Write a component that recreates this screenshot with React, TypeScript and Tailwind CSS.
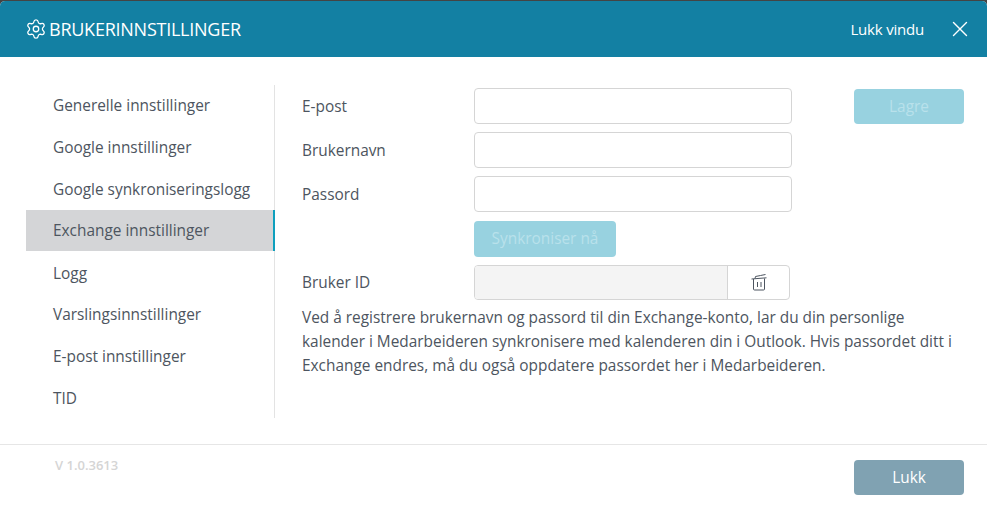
import { Settings, X } from 'lucide-react';

const menuItems = [
  'Generelle innstillinger',
  'Google innstillinger',
  'Google synkroniseringslogg',
  'Exchange innstillinger',
  'Logg',
  'Varslingsinnstillinger',
  'E-post innstillinger',
  'TID',
];

const Field = ({ label }: { label: string }) => (
  <div className="flex items-center h-9">
    <label className="w-[172px] pt-px text-[15.4px] text-[#4d5560]">{label}</label>
    <input className="w-[318px] h-9 border border-[#d5d5d5] rounded-[4px] bg-white" />
  </div>
);

const TrashIcon = () => (
  <svg width="16" height="17" viewBox="0 0 16 17" fill="none" stroke="currentColor" strokeWidth="1">
    <path d="M0.5 5l15-1.2" />
    <path d="M4 4.5l0.5-2 5-1 5-1" />
    <path d="M2.5 5v10a1 1 0 0 0 1 1h9a1 1 0 0 0 1-1V4.5" />
    <path d="M6.5 8v5M10 8v5" />
  </svg>
);

export default function App() {
  return (
    <div className="w-[987px] h-[508px] bg-[#444444] pt-px overflow-hidden font-['Open_Sans',sans-serif]">
      <div className="h-[507px] bg-white rounded-t-[5px] overflow-hidden flex flex-col">
        <header className="h-14 shrink-0 bg-[#1380a3] text-white flex items-center pl-[25px] pr-[14px]">
          <Settings className="w-[22px] h-[22px] mr-[2px]" strokeWidth={1.4} />
          <h1 className="text-[18px] tracking-[-0.25px]">BRUKERINNSTILLINGER</h1>
          <span className="ml-auto text-[15px] tracking-[-0.2px]">Lukk vindu</span>
          <X className="w-[26px] h-[26px] ml-[23px]" strokeWidth={1.3} />
        </header>

        <div className="flex-1 flex pl-[26px] pt-[28px]">
          <nav className="w-[249px] h-[333px] border-r border-[#e3e3e3] flex flex-col">
            {menuItems.map((item) => (
              <div
                key={item}
                className={
                  item === 'Exchange innstillinger'
                    ? 'h-[41px] mb-[0.8px] shrink-0 flex items-center pl-[27px] text-[15.4px] text-[#4d5560] bg-[#d4d5d7] border-r-[2px] border-[#0e9fbd] -mr-px'
                    : 'h-[41.8px] shrink-0 flex items-center pl-[27px] text-[15.4px] text-[#4d5560]'
                }
              >
                {item}
              </div>
            ))}
          </nav>

          <main className="w-[689px] pl-[27px] pt-[3px]">
            <div className="flex items-start justify-between">
              <div className="w-[490px]">
                <div className="flex flex-col gap-2">
                  <Field label="E-post" />
                  <Field label="Brukernavn" />
                  <Field label="Passord" />
                </div>
                <button className="ml-[172px] mt-[9px] w-[142px] h-9 bg-[#98d2e0] text-[#b9e1eb] text-[15.4px] rounded-[4px]">
                  Synkroniser nå
                </button>
                <div className="flex items-center mt-2">
                  <label className="w-[172px] text-[15.4px] text-[#4d5560]">Bruker ID</label>
                  <div className="w-[316px] h-[35px] flex border border-[#d5d5d5] rounded-[4px] overflow-hidden">
                    <div className="flex-1 bg-[#f4f4f4]" />
                    <div className="w-[62px] border-l border-[#d5d5d5] flex items-center justify-center text-[#4d5560]">
                      <TrashIcon />
                    </div>
                  </div>
                </div>
              </div>
              <button className="mt-px w-[110px] h-[35px] pt-px bg-[#98d2e0] text-[#b9e1eb] text-[15.4px] rounded-[4px]">
                Lagre
              </button>
            </div>
            <p className="mt-[6px] text-[15.4px] leading-6 text-[#4d5560]">
              Ved å registrere brukernavn og passord til din Exchange-konto, lar du din personlige
              <br />
              kalender i Medarbeideren synkronisere med kalenderen din i Outlook. Hvis passordet ditt i
              <br />
              Exchange endres, må du også oppdatere passordet her i Medarbeideren.
            </p>
          </main>
        </div>

        <footer className="h-[64px] shrink-0 border-t border-[#e6e6e6] flex items-start justify-between pl-[55px] pr-[23px]">
          <span className="mt-[11px] text-[13px] font-semibold text-[#d5d5d5]">V 1.0.3613</span>
          <button className="mt-[15px] w-[110px] h-[35px] bg-[#80a2b2] text-white text-[15.4px] font-medium rounded-[4px]">
            Lukk
          </button>
        </footer>
      </div>
    </div>
  );
}
